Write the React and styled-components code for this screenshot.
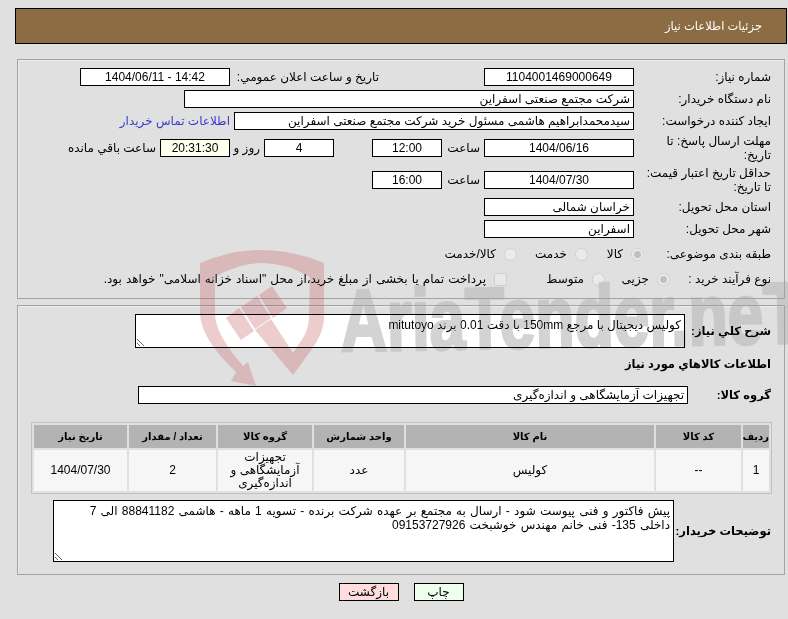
import styled, { createGlobalStyle } from "styled-components";

const GlobalStyle = createGlobalStyle`
  html, body {
    margin: 0;
    height: 100%;
    background: #e0e0e0;
  }
  body {
    font-family: "Liberation Sans", "DejaVu Sans", sans-serif;
    font-size: 12px;
    color: #000;
    overflow: hidden;
  }
`;

const Page = styled.div`
  position: relative;
  direction: rtl;
  width: 772px;
  height: 611px;
  padding: 8px 0 0 15px;
`;

const Header = styled.div`
  height: 34px;
  display: flex;
  align-items: center;
  padding-right: 24px;
  background: #8c6c42;
  border: 1px solid #000;
  color: #fff;
  font-size: 11.5px;
`;

const Panel = styled.div`
  margin: ${({ $top }) => $top}px 2px 0;
  padding: 8px 13px 0 0;
  height: ${({ $height }) => $height}px;
  border: 1px solid #a3a3a3;
  box-shadow: inset 1px 1px 0 #ececec;
  display: flex;
  flex-direction: column;
  gap: 4px;
`;

const Row = styled.div`
  display: flex;
  align-items: center;
  min-height: ${({ $h }) => $h || 18}px;
  margin-top: ${({ $mt }) => $mt || 0}px;
`;

const Label = styled.div`
  width: ${({ $w }) => $w || 137}px;
  flex: none;
  padding-left: 6px;
  box-sizing: border-box;
  line-height: 14px;
  font-size: ${({ $bold }) => ($bold ? 11.5 : 12)}px;
  font-weight: ${({ $bold }) => ($bold ? 700 : 400)};
  white-space: ${({ $bold }) => ($bold ? "nowrap" : "normal")};
`;

const Field = styled.input.attrs({ readOnly: true })`
  box-sizing: border-box;
  flex: none;
  width: ${({ $w }) => $w}px;
  height: 18px;
  margin: 0;
  padding: 0 3px;
  border: 1px solid #000;
  border-radius: 0;
  outline: none;
  background: ${({ $bg }) => $bg || "#fff"};
  color: #000;
  font: inherit;
  direction: rtl;
  text-align: ${({ $center }) => ($center ? "center" : "right")};
`;

const Note = styled.textarea.attrs({ readOnly: true })`
  box-sizing: border-box;
  flex: none;
  display: block;
  width: ${({ $w }) => $w}px;
  height: ${({ $h }) => $h}px;
  margin: 0;
  padding: 3px 3px 2px;
  border: 1px solid #000;
  border-radius: 0;
  outline: none;
  background: #fff;
  color: #000;
  font: inherit;
  line-height: 14px;
  word-spacing: ${({ $spread }) => $spread || 0}px;
  direction: rtl;
  overflow: hidden;
`;

const Text = styled.span`
  flex: none;
  padding-right: 4px;
  box-sizing: border-box;
  width: ${({ $w }) => ($w ? `${$w}px` : "auto")};
  white-space: nowrap;
`;

const Spacer = styled.span`
  flex: none;
  width: ${({ $w }) => $w}px;
`;

const ContactLink = styled.a`
  margin-right: 4px;
  color: #3a3acc;
  white-space: nowrap;
`;

const Option = styled.label`
  display: inline-flex;
  align-items: center;
  flex: none;
  width: ${({ $w }) => $w}px;
  gap: 8px;
  white-space: nowrap;
  word-spacing: ${({ $spread }) => $spread || 0}px;
`;

const Radio = styled.span`
  flex: none;
  width: 13px;
  height: 13px;
  box-sizing: border-box;
  border: 1px solid #d0d0d0;
  border-radius: 50%;
  background: #ebebeb;
  display: flex;
  align-items: center;
  justify-content: center;
  &::after {
    content: "";
    display: ${({ $on }) => ($on ? "block" : "none")};
    width: 7px;
    height: 7px;
    border-radius: 50%;
    background: #c0c0c0;
  }
`;

const Check = styled.span`
  flex: none;
  width: 13px;
  height: 13px;
  box-sizing: border-box;
  border: 1px solid #cfcfcf;
  border-radius: 2px;
  background: #e8e8e8;
`;

const Title = styled.div`
  margin-top: 2px;
  height: 20px;
  line-height: 20px;
  font-size: 11.5px;
  font-weight: 700;
`;

const Table = styled.table`
  margin: 14px -1px 0 0;
  width: 741px;
  box-sizing: border-box;
  border: 1px solid #c2c2c2;
  border-spacing: 2px;
  table-layout: fixed;
`;

const Th = styled.th`
  height: 23px;
  padding: 0;
  background: #b3b3b3;
  font-size: 10px;
  font-weight: 700;
  text-align: center;
`;

const Td = styled.td`
  height: 41px;
  padding: 0 3px;
  background: #f6f6f6;
  line-height: 13px;
  text-align: center;
`;

const Actions = styled.div`
  display: flex;
  justify-content: center;
  gap: 15px;
  margin-top: 8px;
`;

const Button = styled.button`
  box-sizing: border-box;
  width: ${({ $w }) => $w}px;
  height: 18px;
  padding: 0;
  border: 1px solid #000;
  border-radius: 0;
  background: ${({ $bg }) => $bg};
  color: #000;
  font: inherit;
`;

const Shield = styled.svg`
  position: absolute;
  z-index: 2;
  left: 198px;
  top: 248px;
  opacity: 0.355;
  mix-blend-mode: darken;
  pointer-events: none;
`;

const Brand = styled.svg`
  position: absolute;
  z-index: 2;
  left: 335px;
  top: 258px;
  opacity: 0.645;
  mix-blend-mode: darken;
  pointer-events: none;
`;

const columns = [26, 85, 248, 90, 94, 87, 93];
const heads = ["ردیف", "کد کالا", "نام کالا", "واحد شمارش", "گروه کالا", "تعداد / مقدار", "تاریخ نیاز"];

function App() {
  return (
    <Page>
      <GlobalStyle />
      <Shield width="132" height="138" viewBox="198 248 132 138" fill="rgb(201,111,111)">
        <path d="M200 263 Q262 237 324 263 L324 318 Q324 332 312 349 L293 375 L255 330 L271 319 L293 353 L303 338 Q309 328 309 316 L310 277 Q262 249 215 277 L215 315 Q216 335 243 366 L248 362 L256 386 L231 381 L236 372 Q202 340 200 315 Z" />
        <path d="M226 318 L239 308 L254 331 L241 340 Z" />
        <path d="M241 307 L257 296 L271 318 L255 329 Z" />
        <path d="M259 295 L272 286 L287 308 L273 318 Z" />
      </Shield>
      <Brand width="453" height="100" viewBox="0 0 453 100">
        <text
          x="6"
          y="93"
          fontFamily="Liberation Sans, sans-serif"
          fontWeight="700"
          fontSize="87"
          fill="rgb(187,187,187)"
          stroke="rgb(187,187,187)"
          strokeWidth="3"
          textLength="462"
          lengthAdjust="spacingAndGlyphs"
          direction="ltr"
          transform="rotate(-1 6 93)"
        >
          AriaTender.neT
        </text>
      </Brand>

      <Header>جزئیات اطلاعات نیاز</Header>

      <Panel $top={15} $height={230}>
        <Row>
          <Label>شماره نیاز:</Label>
          <Field $w={150} $center value="1104001469000649" />
          <Spacer $w={105} />
          <Label $w={149}>تاریخ و ساعت اعلان عمومي:</Label>
          <Field $w={150} $center value="14:42 - 1404/06/11" />
        </Row>
        <Row>
          <Label>نام دستگاه خریدار:</Label>
          <Field $w={450} value="شرکت مجتمع صنعتی اسفراین" />
        </Row>
        <Row>
          <Label>ایجاد کننده درخواست:</Label>
          <Field $w={400} value="سیدمحمدابراهیم هاشمی مسئول خرید شرکت مجتمع صنعتی اسفراین" />
          <ContactLink>اطلاعات تماس خریدار</ContactLink>
        </Row>
        <Row $h={28}>
          <Label>مهلت ارسال پاسخ: تا تاریخ:</Label>
          <Field $w={150} $center value="1404/06/16" />
          <Text $w={42}>ساعت</Text>
          <Field $w={70} $center value="12:00" />
          <Spacer $w={38} />
          <Field $w={70} $center value="4" />
          <Text $w={34}>روز و</Text>
          <Field $w={70} $center $bg="#ffffee" value="20:31:30" />
          <Text>ساعت باقي مانده</Text>
        </Row>
        <Row $h={28}>
          <Label>حداقل تاریخ اعتبار قیمت: تا تاریخ:</Label>
          <Field $w={150} $center value="1404/07/30" />
          <Text $w={42}>ساعت</Text>
          <Field $w={70} $center value="16:00" />
        </Row>
        <Row>
          <Label>استان محل تحویل:</Label>
          <Field $w={150} value="خراسان شمالی" />
        </Row>
        <Row>
          <Label>شهر محل تحویل:</Label>
          <Field $w={150} value="اسفراین" />
        </Row>
        <Row $h={24}>
          <Label $w={127}>طبقه بندی موضوعی:</Label>
          <Option $w={56}><Radio $on />کالا</Option>
          <Option $w={71}><Radio />خدمت</Option>
          <Option $w={100}><Radio />کالا/خدمت</Option>
        </Row>
        <Row>
          <Label $w={101}>نوع فرآیند خرید :</Label>
          <Option $w={65}><Radio $on />جزیی</Option>
          <Option $w={98}><Radio />متوسط</Option>
          <Option $w={400} $spread={0.7}><Check />پرداخت تمام یا بخشی از مبلغ خرید،از محل "اسناد خزانه اسلامی" خواهد بود.</Option>
        </Row>
      </Panel>

      <Panel $top={6} $height={260}>
        <Row $h={34}>
          <Label $w={86} $bold>شرح کلي نياز:</Label>
          <Note $w={550} $h={34} defaultValue="کولیس دیجیتال با مرجع 150mm با دقت 0.01 برند mitutoyo" />
        </Row>
        <Title>اطلاعات کالاهاي مورد نياز</Title>
        <Row $mt={8}>
          <Label $w={83} $bold>گروه کالا:</Label>
          <Field $w={550} value="تجهیزات آزمایشگاهی و اندازه‌گیری" />
        </Row>
        <Table>
          <colgroup>
            {columns.map((w, i) => (
              <col key={i} width={w} />
            ))}
          </colgroup>
          <thead>
            <tr>
              {heads.map((h) => (
                <Th key={h}>{h}</Th>
              ))}
            </tr>
          </thead>
          <tbody>
            <tr>
              <Td>1</Td>
              <Td>--</Td>
              <Td>کولیس</Td>
              <Td>عدد</Td>
              <Td>تجهیزات آزمایشگاهی و اندازه‌گیری</Td>
              <Td>2</Td>
              <Td>1404/07/30</Td>
            </tr>
          </tbody>
        </Table>
        <Row $h={62} $mt={2}>
          <Label $w={97} $bold>توضیحات خریدار:</Label>
          <Note
            $w={621}
            $h={62}
            $spread={0.9}
            defaultValue={"پیش فاکتور و فنی پیوست شود - ارسال به مجتمع بر عهده شرکت برنده - تسویه 1 ماهه - هاشمی 88841182 الی 7\nداخلی 135- فنی خانم مهندس خوشبخت 09153727926"}
          />
        </Row>
      </Panel>

      <Actions>
        <Button $w={50} $bg="#eeffee">چاپ</Button>
        <Button $w={60} $bg="#ffdddd">بازگشت</Button>
      </Actions>
    </Page>
  );
}

export default App;
